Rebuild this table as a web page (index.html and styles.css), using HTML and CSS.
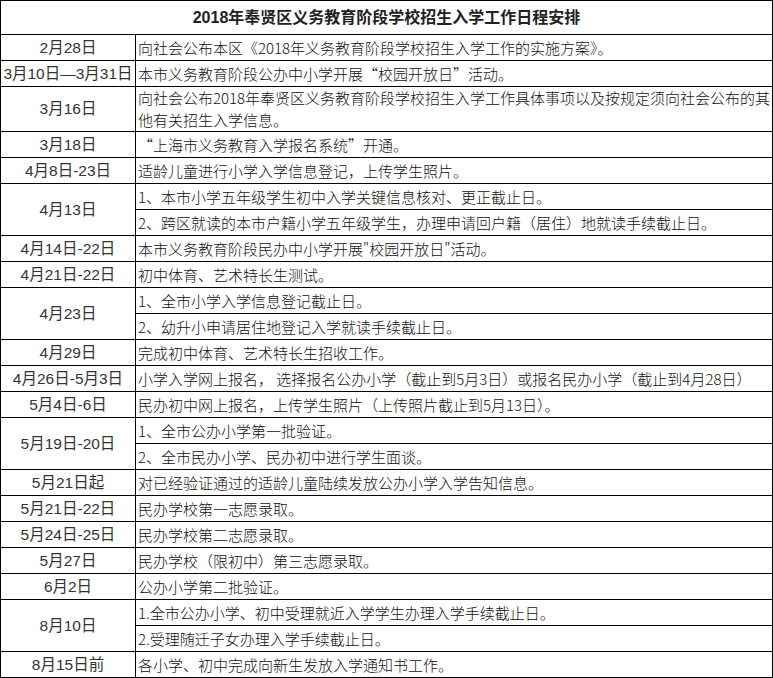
FILE: index.html
```html
<!DOCTYPE html>
<html lang="zh-CN">
<head>
<meta charset="utf-8">
<title>2018年奉贤区义务教育阶段学校招生入学工作日程安排</title>
<link rel="stylesheet" href="styles.css">
</head>
<body>
<div class="sched">
  <div class="title">2018年奉贤区义务教育阶段学校招生入学工作日程安排</div>

  <div class="date">2月28日</div>
  <div class="item">向社会公布本区《2018年义务教育阶段学校招生入学工作的实施方案》。</div>

  <div class="date">3月10日—3月31日</div>
  <div class="item">本市义务教育阶段公办中小学开展<span class="fq">“</span>校园开放日<span class="fq">”</span>活动。</div>

  <div class="date">3月16日</div>
  <div class="item tall">向社会公布2018年奉贤区义务教育阶段学校招生入学工作具体事项以及按规定须向社会公布的其<br>他有关招生入学信息。</div>

  <div class="date">3月18日</div>
  <div class="item"><span class="fq">“</span>上海市义务教育入学报名系统<span class="fq">”</span>开通。</div>

  <div class="date">4月8日-23日</div>
  <div class="item">适龄儿童进行小学入学信息登记，上传学生照片。</div>

  <div class="date span2">4月13日</div>
  <div class="item">1、本市小学五年级学生初中入学关键信息核对、更正截止日。</div>
  <div class="item">2、跨区就读的本市户籍小学五年级学生，办理申请回户籍（居住）地就读手续截止日。</div>

  <div class="date">4月14日-22日</div>
  <div class="item">本市义务教育阶段民办中小学开展"校园开放日"活动。</div>

  <div class="date">4月21日-22日</div>
  <div class="item">初中体育、艺术特长生测试。</div>

  <div class="date span2">4月23日</div>
  <div class="item">1、全市小学入学信息登记截止日。</div>
  <div class="item">2、幼升小申请居住地登记入学就读手续截止日。</div>

  <div class="date">4月29日</div>
  <div class="item">完成初中体育、艺术特长生招收工作。</div>

  <div class="date">4月26日-5月3日</div>
  <div class="item">小学入学网上报名， 选择报名公办小学（截止到5月3日）或报名民办小学（截止到4月28日）</div>

  <div class="date">5月4日-6日</div>
  <div class="item">民办初中网上报名，上传学生照片（上传照片截止到5月13日）。</div>

  <div class="date span2">5月19日-20日</div>
  <div class="item">1、全市公办小学第一批验证。</div>
  <div class="item">2、全市民办小学、民办初中进行学生面谈。</div>

  <div class="date">5月21日起</div>
  <div class="item">对已经验证通过的适龄儿童陆续发放公办小学入学告知信息。</div>

  <div class="date">5月21日-22日</div>
  <div class="item">民办学校第一志愿录取。</div>

  <div class="date">5月24日-25日</div>
  <div class="item">民办学校第二志愿录取。</div>

  <div class="date">5月27日</div>
  <div class="item">民办学校（限初中）第三志愿录取。</div>

  <div class="date">6月2日</div>
  <div class="item">公办小学第二批验证。</div>

  <div class="date span2">8月10日</div>
  <div class="item">1.全市公办小学、初中受理就近入学学生办理入学手续截止日。</div>
  <div class="item">2.受理随迁子女办理入学手续截止日。</div>

  <div class="date">8月15日前</div>
  <div class="item">各小学、初中完成向新生发放入学通知书工作。</div>
</div>
</body>
</html>
```
FILE: styles.css
```css
html, body {
  margin: 0;
  padding: 0;
  background: #fff;
}

.sched {
  box-sizing: border-box;
  width: 773px;
  padding: 1px;
  gap: 1px;
  background: #000;
  display: grid;
  grid-template-columns: 134px 636px;
  grid-template-rows: 33px 25px 25px 44px repeat(21, 25px);
}

.sched > div {
  background: #fff;
  display: flex;
  align-items: center;
  overflow: hidden;
}

.title {
  grid-column: 1 / -1;
  justify-content: center;
  font-family: "Liberation Sans", "Noto Sans CJK SC", sans-serif;
  font-weight: bold;
  font-size: 16px;
  color: #222;
  line-height: 20px;
}

.date {
  justify-content: center;
  font-family: "Liberation Sans", "Noto Sans CJK SC", sans-serif;
  font-size: 15.5px;
  color: #333;
  line-height: 20px;
  white-space: nowrap;
}

.span2 {
  grid-row: span 2;
}

.item {
  padding-left: 2px;
  font-family: "Noto Sans CJK SC", "Liberation Sans", sans-serif;
  font-size: 15px;
  font-weight: 300;
  color: #111;
  line-height: 20px;
  white-space: nowrap;
}

.item.tall {
  display: block;
  line-height: 22px;
}

.fq {
  display: inline-block;
  width: 15px;
  font-feature-settings: "fwid" 1;
}

.item > .fq:first-of-type {
  text-align: right;
}

.item > .fq:last-of-type {
  text-align: left;
}
```
